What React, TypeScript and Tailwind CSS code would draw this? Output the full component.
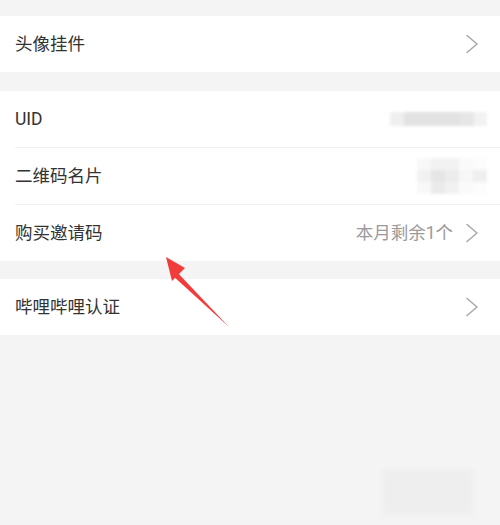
import React from "react";

function Chevron() {
  return (
    <svg width="14" height="20" viewBox="0 0 14 20" fill="none" className="shrink-0">
      <path d="M2 1.5 L12 10 L2 18.5" stroke="#a8a8a8" strokeWidth="1.5" strokeLinecap="round" strokeLinejoin="round" />
    </svg>
  );
}

function Row({ label, children }: { label: string; children?: React.ReactNode }) {
  return (
    <div className="flex h-[56px] items-center justify-between pl-[15px] pr-[21px]">
      <span className="text-[17.5px] text-[#333]">{label}</span>
      <div className="flex items-center gap-[12px]">{children}</div>
    </div>
  );
}

// pixelated placeholder for a hidden value
function MaskedUid() {
  return (
    <div className="mr-[-8px] flex h-[14px] w-[97px] blur-[1.5px]">
      <div className="w-[14px] bg-[#efefef]" />
      <div className="w-[56px] bg-[#e2e2e2]" />
      <div className="w-[14px] bg-[#e6e6e6]" />
      <div className="w-[13px] bg-[#f2f2f2]" />
    </div>
  );
}

function MaskedQr() {
  const cells = [
    "#f8f8f8", "#f2f2f2", "#f2f2f2", "#fafafa", "#fcfcfc",
    "#f1f1f1", "#e6e6e6", "#ececec", "#f7f7f7", "#efefef",
    "#f8f8f8", "#ebebeb", "#f1f1f1", "#fafafa", "#fcfcfc",
  ];
  return (
    <div className="mr-[-8px] grid h-[36px] w-[70px] grid-cols-5 blur-[1.5px]">
      {cells.map((c, i) => (
        <div key={i} style={{ backgroundColor: c }} />
      ))}
    </div>
  );
}

export default function App() {
  return (
    <div
      className="relative h-[525px] w-[500px] overflow-hidden bg-[#f4f4f4]"
      style={{ fontFamily: 'Roboto, "Noto Sans CJK SC", sans-serif' }}
    >
      <div className="flex flex-col pt-[16px]">
        <div className="bg-white">
          <Row label="头像挂件">
            <Chevron />
          </Row>
        </div>

        <div className="mt-[19px] bg-white">
          <Row label="UID">
            <MaskedUid />
          </Row>
          <div className="ml-[15px] h-px bg-[#f1f1f1]" />
          <Row label="二维码名片">
            <MaskedQr />
          </Row>
          <div className="ml-[15px] h-px bg-[#f1f1f1]" />
          <Row label="购买邀请码">
            <span className="text-[17.5px] text-[#9a9a9a]">本月剩余1个</span>
            <Chevron />
          </Row>
        </div>

        <div className="mt-[18px] bg-white">
          <Row label="哔哩哔哩认证">
            <Chevron />
          </Row>
        </div>

        <div className="flex justify-end pr-[27px] pt-[135px]">
          <div className="h-[45px] w-[90px] bg-[#eeeeee] blur-[2px]" />
        </div>
      </div>

      {/* annotation arrow */}
      <svg className="pointer-events-none absolute left-0 top-0" width="500" height="525">
        <path d="M229 327 L176 271 L172 275 Z" fill="#f23c3c" />
        <path d="M166 257 L185 268 L172 281 Z" fill="#f23c3c" />
      </svg>
    </div>
  );
}
